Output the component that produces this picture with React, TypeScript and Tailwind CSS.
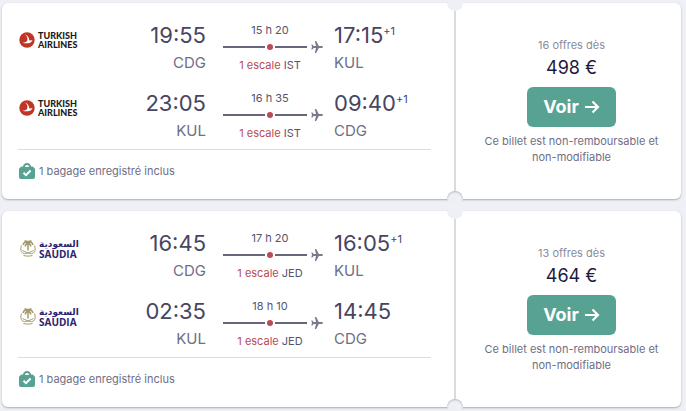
type LegData = {
  depart: string;
  from: string;
  duration: string;
  via: string;
  arrive: string;
  to: string;
  nextDay?: boolean;
};

type Offer = {
  airline: "turkish" | "saudia";
  offers: string;
  price: string;
  legs: LegData[];
};

const offers: Offer[] = [
  {
    airline: "turkish",
    offers: "16 offres dès",
    price: "498 €",
    legs: [
      { depart: "19:55", from: "CDG", duration: "15 h 20", via: "IST", arrive: "17:15", to: "KUL", nextDay: true },
      { depart: "23:05", from: "KUL", duration: "16 h 35", via: "IST", arrive: "09:40", to: "CDG", nextDay: true },
    ],
  },
  {
    airline: "saudia",
    offers: "13 offres dès",
    price: "464 €",
    legs: [
      { depart: "16:45", from: "CDG", duration: "17 h 20", via: "JED", arrive: "16:05", to: "KUL", nextDay: true },
      { depart: "02:35", from: "KUL", duration: "18 h 10", via: "JED", arrive: "14:45", to: "CDG" },
    ],
  },
];

function TurkishLogo() {
  return (
    <div className="flex h-[42px] items-center gap-[3px] pl-px">
      <svg viewBox="0 0 16 16" className="size-4 shrink-0" aria-hidden="true">
        <circle cx="8" cy="8" r="7.7" fill="#bf3627" />
        <path
          d="M6 2.200C8 4 8.800 6 8.300 8.200 8 9.600 6.400 10.400 3.400 10.700c3.200 1.100 6.800.8 8.800-.8.600-.6 1.100-1.200 1.300-1.900-1.200.4-2.200.5-3.300.300C10.200 5.900 9 3.700 6 2.200z"
          fill="#fff"
        />
      </svg>
      <div className="font-['Lato',sans-serif] text-[9px] leading-[9px] font-black text-[#1c1a1b]">
        TURKISH
        <br />
        AIRLINES
      </div>
    </div>
  );
}

function SaudiaLogo() {
  return (
    <div className="flex h-[42px] items-center gap-[3px] pl-0.5">
      <svg viewBox="0 0 16 17" className="h-[17px] w-4 shrink-0" fill="none" stroke="#a39a6b" aria-hidden="true">
        <path d="M8 10.500V4" strokeWidth="1.500" />
        <path
          d="M8 4C6 1 3.500 2 3.200 5M8 4c2-3 4.500-2 4.800 1M8 4C6 3.500 5.500 5 5.300 6.500M8 4c2-.5 2.500 1 2.700 2.500M8 4V.8M8 3C7 1 5.500.8 4.500 1.500M8 3c1-2 2.500-2.200 3.500-1.500"
          strokeWidth="1.700"
        />
        <path
          d="M1.500 5.500C-.4 11 2 14 5.500 13.600c3-.6 6-2.100 8-3.100M14.500 5.500c1.900 5.500-.5 8.500-4 8.100-3-.6-6-2.100-8-3.100"
          strokeWidth="1"
        />
        <path d="M3.500 15.500c3 .8 6 .8 9 0" strokeWidth="1" />
      </svg>
      <div className="pt-1 text-[#2b2472]">
        <div lang="ar" dir="rtl" className="font-['DejaVu_Sans',sans-serif] text-[9px] leading-[9px] font-bold">
          السعودية
        </div>
        <div className="font-['Open_Sans',sans-serif] text-[10px] leading-[11px] font-bold">SAUDIA</div>
      </div>
    </div>
  );
}

function Plane() {
  return (
    <svg viewBox="0 0 12 12" className="size-3 shrink-0" fill="#7b798c" aria-hidden="true">
      <path d="M12 6c0-.6-.7-.9-1.500-.9H7.800L5.200 0H3.800l1.200 5.100H2.600L1.400 3.500H.3L1 6 .3 8.500h1.100l1.200-1.600H5L3.800 12h1.400l2.600-5.100h2.700c.8 0 1.500-.3 1.500-.9z" />
    </svg>
  );
}

function BagCheck() {
  return (
    <svg viewBox="0 0 16 16" className="size-4 shrink-0" aria-hidden="true">
      <path
        d="M4 3.500C4.400 1.200 5.700 0 8 0s3.600 1.200 4 3.500h1.500l2 1.500q.5.500.5 1.500V14q0 2-2 2H2q-2 0-2-2V6.500Q0 5.500.5 5l2-1.500z"
        fill="#58a294"
      />
      <path d="M6 4C6 2.700 6.800 2 8 2s2 .7 2 2z" fill="#fff" />
      <path d="M4.500 9.800 7 12.200l4.600-4.700" fill="none" stroke="#fff" strokeWidth="2" />
    </svg>
  );
}

function Leg({ leg, airline }: { leg: LegData; airline: Offer["airline"] }) {
  return (
    <div className="grid grid-cols-[60px_1fr_106px_97px] gap-x-[11px]">
      {airline === "turkish" ? <TurkishLogo /> : <SaudiaLogo />}
      <div className="text-right">
        <div className="text-[22px] leading-8 text-[#48455f]">{leg.depart}</div>
        <div className="text-[15px] leading-6 text-[#706e84]">{leg.from}</div>
      </div>
      <div className="pt-0.5 text-center text-[11px] text-[#56536c]">
        <div className="leading-[18px]">{leg.duration}</div>
        <div className="flex h-4 items-center pl-1.5">
          <div className="h-0.5 w-[42px] bg-[#68657c]" />
          <div className="mx-0.5 size-1.5 rounded-full bg-[#b94a58]" />
          <div className="h-0.5 flex-1 bg-[#68657c]" />
          <div className="pl-1">
            <Plane />
          </div>
        </div>
        <div className="leading-5">
          <span className="text-[#b94a58]">1 escale</span> {leg.via}
        </div>
      </div>
      <div>
        <div className="flex text-[22px] leading-8 text-[#48455f]">
          {leg.arrive}
          {leg.nextDay && <span className="text-[11px] leading-6">+1</span>}
        </div>
        <div className="text-[15px] leading-6 text-[#706e84]">{leg.to}</div>
      </div>
    </div>
  );
}

function Ticket({ offer }: { offer: Offer }) {
  return (
    <article className="flex rounded-md bg-white shadow-[0_1px_2px_#a9a9b5]">
      <div className="flex-1 pt-4 pr-[23px] pb-[18px] pl-4">
        <div className="space-y-3">
          {offer.legs.map((leg) => (
            <Leg key={leg.depart} leg={leg} airline={offer.airline} />
          ))}
        </div>
        <div className="mt-1.5 flex h-8 items-center gap-1 border-t border-[#dcdbe2] pt-[11px] pl-px text-[11px] text-[#706e84]">
          <BagCheck />
          <span>1 bagage enregistré inclus</span>
        </div>
      </div>
      <div className="relative w-0.5 bg-[#dadae0]">
        <div className="absolute -top-0.5 -left-[7px] h-2.5 w-4 rounded-b-full bg-[#eff0f6]" />
        <div className="absolute -bottom-[3px] -left-[7px] h-[11px] w-4 rounded-t-full bg-[#eff0f6] shadow-[inset_0_1px_2px_#b8b8c2]" />
      </div>
      <div className="flex w-[225px] flex-col items-center justify-center pr-2.5 pl-4 text-center">
        <div className="text-[11px] leading-4 text-[#8c8a9b]">{offer.offers}</div>
        <div className="text-lg leading-[30px] text-[#1f1a3d]">{offer.price}</div>
        <button
          type="button"
          className="mt-1 flex h-10 items-center gap-1.5 rounded-md bg-[#58a294] px-4 text-lg font-bold text-white"
        >
          Voir
          <svg viewBox="0 0 15 14" className="h-3.5 w-[15px]" fill="none" stroke="currentColor" strokeWidth="2.200" aria-hidden="true">
            <path d="M0 7h13M7.500 1.500 13 7l-5.500 5.500" />
          </svg>
        </button>
        <p className="mt-1.5 text-[11px] leading-4 text-[#706e84]">
          Ce billet est non-remboursable et non-modifiable
        </p>
      </div>
    </article>
  );
}

export default function App() {
  return (
    <main className="min-h-screen space-y-3 bg-[#eff0f6] pt-[3px] pr-[5px] pb-1 pl-0.5 font-['Inter',sans-serif]">
      {offers.map((offer) => (
        <Ticket key={offer.airline} offer={offer} />
      ))}
    </main>
  );
}
